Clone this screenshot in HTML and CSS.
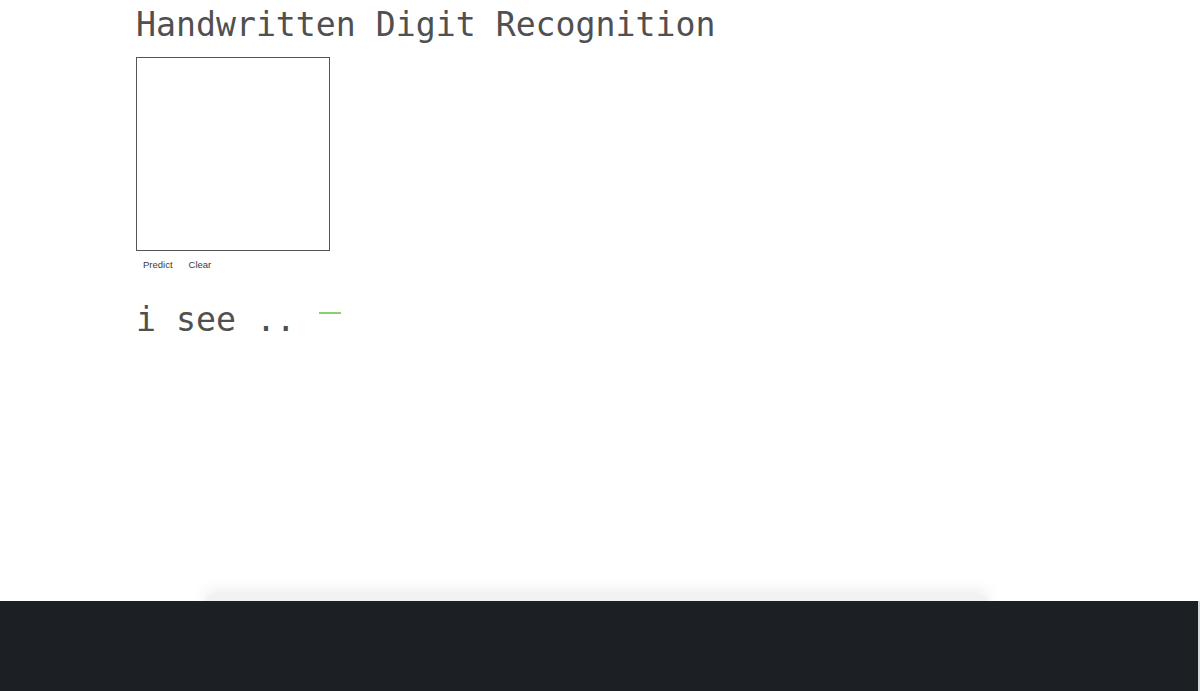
FILE: index.html
```html
<!DOCTYPE html>
<html>
<head>
<meta charset="utf-8">
<link rel="stylesheet" href="styles.css">
</head>
<body>
<div class="page">
  <main class="main">
    <h1 class="title">Handwritten Digit Recognition</h1>
    <div class="canvas"></div>
    <div class="actions">
      <button class="btn">Predict</button>
      <button class="btn">Clear</button>
    </div>
    <div class="result">
      <span class="result-text">i see ..</span>
      <span class="cursor"></span>
    </div>
  </main>
  <footer class="footer"></footer>
</div>
</body>
</html>
```

FILE: styles.css
```css
html, body {
  margin: 0;
  padding: 0;
  background: #ffffff;
}
.page {
  width: 1200px;
  height: 691px;
  display: flex;
  flex-direction: column;
  overflow: hidden;
}
.main {
  height: 601px;
  padding-left: 136px;
  box-sizing: border-box;
  position: relative;
}
.main::after {
  content: "";
  position: absolute;
  left: 205px;
  right: 212px;
  bottom: -8px;
  height: 14px;
  border-radius: 14px;
  box-shadow: 0 -3px 16px rgba(0, 0, 0, 0.10);
  background: #f2f2f3;
}
.title {
  margin: 0;
  padding-top: 5px;
  font-family: "DejaVu Sans Mono", "Liberation Mono", monospace;
  font-weight: 300;
  font-size: 33.2px;
  line-height: 40px;
  color: #505050;
}
.canvas {
  margin-top: 12px;
  width: 192px;
  height: 192px;
  border: 1px solid #555;
  background: #fff;
}
.actions {
  display: flex;
  gap: 4px;
  margin-top: 6px;
  padding-left: 1px;
}
.btn {
  font-family: "Liberation Sans", Arial, sans-serif;
  font-size: 9.5px;
  color: #3a3a3a;
  background: transparent;
  border: none;
  padding: 2px 6px;
  line-height: 12px;
}
.result {
  display: flex;
  align-items: flex-start;
  margin-top: 27px;
}
.result-text {
  font-family: "DejaVu Sans Mono", "Liberation Mono", monospace;
  font-size: 33.2px;
  line-height: 40px;
  color: #505050;
  white-space: pre;
}
.cursor {
  display: block;
  width: 22px;
  height: 2px;
  margin-left: 23px;
  margin-top: 12px;
  background: #86d06f;
}
.footer {
  position: relative;
  z-index: 1;
  height: 90px;
  background: #1c1f24;
  border-right: 2px solid #d8d8d8;
  box-sizing: border-box;
}
```
